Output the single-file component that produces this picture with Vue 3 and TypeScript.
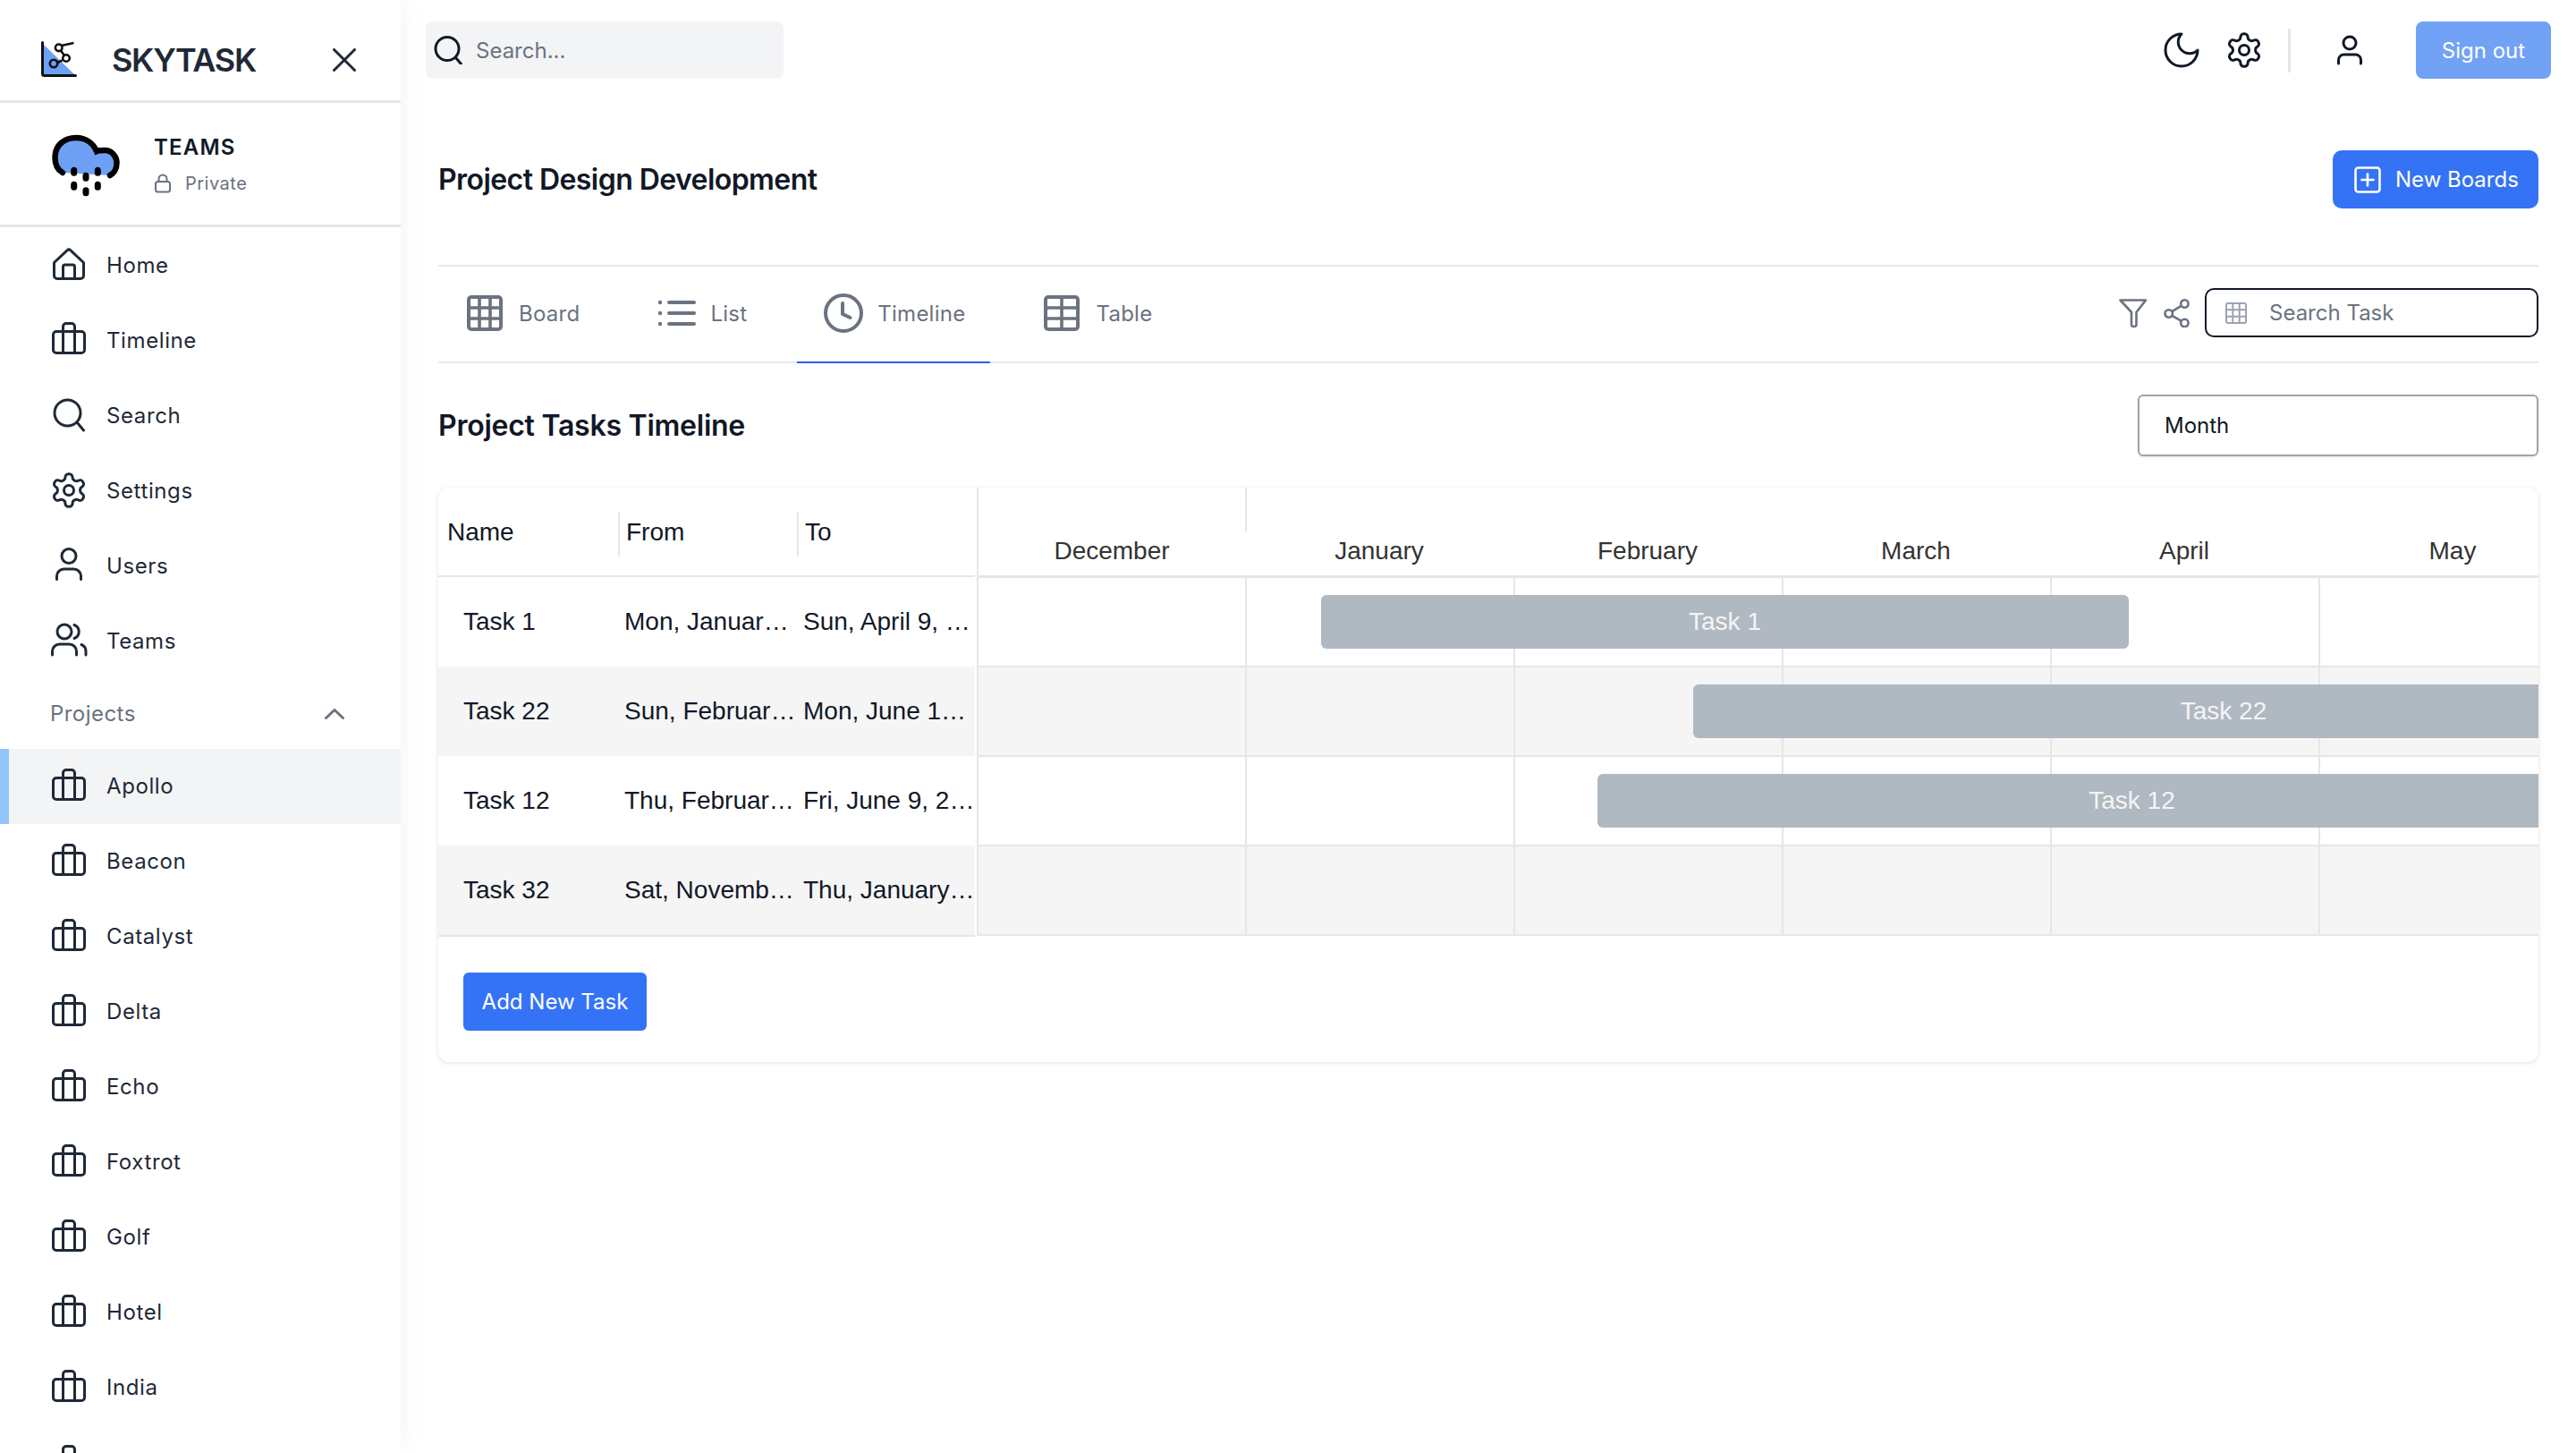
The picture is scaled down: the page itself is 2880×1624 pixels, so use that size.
<script setup lang="ts">
type Glyph = { d: string; vb?: string; sw?: number }

const gear =
  'M12.22 2h-.44a2 2 0 0 0-2 2v.18a2 2 0 0 1-1 1.73l-.43.25a2 2 0 0 1-2 0l-.15-.08a2 2 0 0 0-2.73.73l-.22.38a2 2 0 0 0 .73 2.73l.15.1a2 2 0 0 1 1 1.72v.51a2 2 0 0 1-1 1.74l-.15.09a2 2 0 0 0-.73 2.73l.22.38a2 2 0 0 0 2.73.73l.15-.08a2 2 0 0 1 2 0l.43.25a2 2 0 0 1 1 1.73V20a2 2 0 0 0 2 2h.44a2 2 0 0 0 2-2v-.18a2 2 0 0 1 1-1.73l.43-.25a2 2 0 0 1 2 0l.15.08a2 2 0 0 0 2.73-.73l.22-.39a2 2 0 0 0-.73-2.73l-.15-.08a2 2 0 0 1-1-1.74v-.5a2 2 0 0 1 1-1.74l.15-.09a2 2 0 0 0 .73-2.73l-.22-.38a2 2 0 0 0-2.73-.73l-.15.08a2 2 0 0 1-2 0l-.43-.25a2 2 0 0 1-1-1.73V4a2 2 0 0 0-2-2zM15 12a3 3 0 1 1-6 0 3 3 0 0 1 6 0Z'

const glyphs: Record<string, Glyph> = {
  home: { d: 'M5.5 19.5 20.3 5.6a2.5 2.5 0 0 1 3.4 0L38.5 19.5V34a3.5 3.5 0 0 1-3.5 3.5H9A3.5 3.5 0 0 1 5.5 34ZM15.5 37.5V24a2 2 0 0 1 2-2h9a2 2 0 0 1 2 2v13.5' },
  case: { d: 'M8 12.5H36a3.5 3.5 0 0 1 3.5 3.5V33a3.5 3.5 0 0 1-3.5 3.5H8A3.5 3.5 0 0 1 4.5 33V16A3.5 3.5 0 0 1 8 12.5ZM15.5 36.5V7a3.5 3.5 0 0 1 3.5-3.5h6a3.5 3.5 0 0 1 3.5 3.5v29.5' },
  search: { d: 'M35 19.5a14.5 14.5 0 1 1-29 0 14.5 14.5 0 0 1 29 0ZM31 30l7.5 9' },
  gear: { d: gear, vb: '0 0 24 24', sw: 1.64 },
  user: { d: 'M30 11.5a8 8 0 1 1-16 0 8 8 0 0 1 16 0ZM8.5 37.5V34a8 8 0 0 1 8-8h11a8 8 0 0 1 8 8v3.5' },
  users: { d: 'M25 12a8 8 0 1 1-16 0 8 8 0 0 1 16 0ZM3.5 38v-4a8 8 0 0 1 8-8h11a8 8 0 0 1 8 8v4M28 4.5a8 8 0 0 1 0 15M36 26.5a8 8 0 0 1 5 7.5v4' },
}

const mainNav = [
  { label: 'Home', icon: 'home' },
  { label: 'Timeline', icon: 'case' },
  { label: 'Search', icon: 'search' },
  { label: 'Settings', icon: 'gear' },
  { label: 'Users', icon: 'user' },
  { label: 'Teams', icon: 'users' },
]

const projects = ['Apollo', 'Beacon', 'Catalyst', 'Delta', 'Echo', 'Foxtrot', 'Golf', 'Hotel', 'India', '']
const months = ['December', 'January', 'February', 'March', 'April', 'May']

const tasks = [
  { name: 'Task 1', from: 'Mon, January 9, 2023', to: 'Sun, April 9, 2023' },
  { name: 'Task 22', from: 'Sun, February 5, 2023', to: 'Mon, June 12, 2023' },
  { name: 'Task 12', from: 'Thu, February 9, 2023', to: 'Fri, June 9, 2023' },
  { name: 'Task 32', from: 'Sat, November 5, 2022', to: 'Thu, January 5, 2023' },
]

const bars = [
  { label: 'Task 1', left: 385, top: 120, width: 903 },
  { label: 'Task 22', left: 801, top: 220, width: 1186 },
  { label: 'Task 12', left: 694, top: 320, width: 1195 },
]
</script>

<template>
  <div class="app">
    <aside class="side">
      <div class="brand">
        <svg class="logo" width="40" height="40" viewBox="0 0 40 40" fill="none">
          <path d="M2 3 37 37H2Z" fill="#6ea0f5" />
          <path d="M1.5 1.5V36.5a2 2 0 0 0 2 2H38.5" stroke="#111" stroke-width="3" stroke-linecap="round" />
          <path d="M22.5 5 36.5 2M22 10.5l3.5 5M23.5 21.5l-5.5 2.5" stroke="#111" stroke-width="2.6" />
          <circle cx="19.7" cy="7.3" r="3.8" stroke="#111" stroke-width="2.6" />
          <circle cx="28" cy="19" r="3.8" stroke="#111" stroke-width="2.6" />
          <circle cx="14" cy="25" r="4.2" stroke="#111" stroke-width="2.6" />
        </svg>
        <span class="brand-name">SKYTASK</span>
        <svg class="close" width="26" height="26" viewBox="0 0 26 26" fill="none">
          <path d="M1.5 1.5 24.5 24.5M24.5 1.5 1.5 24.5" stroke="#1f2937" stroke-width="3" stroke-linecap="round" />
        </svg>
      </div>

      <div class="team">
        <svg class="cloud" width="80" height="80" viewBox="0 0 80 80" fill="none">
          <path d="M14 47C7 43 5.5 36 5.5 30 5.5 16 16 8 29 8 40 8 48 14 52 23 54 22 58 22 61 22 69 22 74.5 29 74.5 36 74.5 43 71 48 67 50L14 47Z" fill="#6ea0f5" />
          <path d="M14 47C7 43 5.5 36 5.5 30 5.5 16 16 8 29 8 40 8 48 14 52 23 54 22 58 22 61 22 69 22 74.5 29 74.5 36 74.5 43 71 48 67 50" stroke="#000" stroke-width="6.5" stroke-linecap="round" />
          <rect x="23.2" y="40.7" width="7" height="10" rx="3.5" fill="#000" />
          <rect x="36.5" y="46.7" width="7" height="10" rx="3.5" fill="#000" />
          <rect x="49.8" y="40.7" width="7" height="10" rx="3.5" fill="#000" />
          <rect x="23.2" y="56.7" width="7" height="10" rx="3.5" fill="#000" />
          <rect x="36.5" y="63.3" width="7" height="10" rx="3.5" fill="#000" />
          <rect x="49.8" y="56.7" width="7" height="10" rx="3.5" fill="#000" />
        </svg>
        <div class="team-text">
          <div class="team-name">TEAMS</div>
          <div class="team-sub">
            <svg width="20" height="22" viewBox="0 0 20 22" fill="none">
              <rect x="2" y="9" width="16" height="11.5" rx="2.5" stroke="#6b7280" stroke-width="2" />
              <path d="M5.5 9V6a4.5 4.5 0 0 1 9 0v3" stroke="#6b7280" stroke-width="2" />
            </svg>
            <span>Private</span>
          </div>
        </div>
      </div>

      <nav>
        <a v-for="item in mainNav" :key="item.label" class="nav-row">
          <svg class="nav-icon" width="44" height="44" :viewBox="glyphs[item.icon].vb || '0 0 44 44'" fill="none">
            <path :d="glyphs[item.icon].d" stroke="#1f2937" :stroke-width="glyphs[item.icon].sw || 3" stroke-linecap="round" stroke-linejoin="round" />
          </svg>
          <span>{{ item.label }}</span>
        </a>
        <div class="nav-head">
          <span>Projects</span>
          <svg width="22" height="12" viewBox="0 0 22 12" fill="none">
            <path d="M1.5 10.5 11 1.5l9.5 9" stroke="#6b7280" stroke-width="3" stroke-linecap="round" stroke-linejoin="round" />
          </svg>
        </div>
        <a v-for="(name, i) in projects" :key="i" class="nav-row project" :class="{ current: i === 0 }">
          <svg class="nav-icon" width="44" height="44" viewBox="0 0 44 44" fill="none">
            <path :d="glyphs.case.d" stroke="#1f2937" stroke-width="3" stroke-linejoin="round" />
          </svg>
          <span v-if="name">{{ name }}</span>
        </a>
      </nav>
    </aside>

    <main class="main">
      <header class="top">
        <div class="top-search">
          <svg width="32" height="32" viewBox="0 0 32 32" fill="none">
            <path d="M27 14.5a13 13 0 1 1-26 0 13 13 0 0 1 26 0ZM23.5 24.5l6 7" stroke="#111827" stroke-width="3" stroke-linecap="round" transform="translate(1 0)" />
          </svg>
          <span>Search...</span>
        </div>
        <div class="top-actions">
          <svg class="moon" width="48" height="48" viewBox="0 0 24 24" fill="none">
            <path d="M12 3a6 6 0 0 0 9 9 9 9 0 1 1-9-9Z" stroke="#111827" stroke-width="1.5" stroke-linecap="round" stroke-linejoin="round" />
          </svg>
          <svg class="cog" width="44" height="44" viewBox="0 0 24 24" fill="none">
            <path :d="gear" stroke="#111827" stroke-width="1.64" stroke-linecap="round" stroke-linejoin="round" />
          </svg>
          <span class="v-rule"></span>
          <svg class="person" width="32" height="36" viewBox="0 0 32 36" fill="none">
            <circle cx="16" cy="10" r="7" stroke="#111827" stroke-width="3" />
            <path d="M3.5 33v-4a6 6 0 0 1 6-6h13a6 6 0 0 1 6 6v4" stroke="#111827" stroke-width="3" stroke-linecap="round" />
          </svg>
          <button class="sign-out">Sign out</button>
        </div>
      </header>

      <div class="content">
        <div class="title-row">
          <h1>Project Design Development</h1>
          <button class="new-board">
            <svg width="30" height="30" viewBox="0 0 30 30" fill="none">
              <rect x="1.5" y="1.5" width="27" height="27" rx="3" stroke="#fff" stroke-width="2.6" />
              <path d="M15 8.5v13M8.5 15h13" stroke="#fff" stroke-width="2.6" stroke-linecap="round" />
            </svg>
            <span>New Boards</span>
          </button>
        </div>

        <div class="tabs">
          <a class="tab">
            <svg width="44" height="44" viewBox="0 0 44 44" fill="none" stroke="#6b7280">
              <rect x="4" y="4" width="36" height="36" rx="3" stroke-width="4" />
              <path d="M16 4v36M28 4v36M4 16h36M4 28h36" stroke-width="3.6" />
            </svg>
            <span>Board</span>
          </a>
          <a class="tab">
            <svg width="44" height="44" viewBox="0 0 44 44" fill="none" stroke="#6b7280" stroke-linecap="round">
              <path d="M14 10h28M14 22h28M14 34h28" stroke-width="4" />
              <circle cx="4" cy="10" r="1" stroke-width="2.4" />
              <circle cx="4" cy="22" r="1" stroke-width="2.4" />
              <circle cx="4" cy="34" r="1" stroke-width="2.4" />
            </svg>
            <span>List</span>
          </a>
          <a class="tab active">
            <svg width="44" height="44" viewBox="0 0 44 44" fill="none" stroke="#6b7280" stroke-width="4" stroke-linecap="round" stroke-linejoin="round">
              <circle cx="22" cy="22" r="20" />
              <path d="M21 11v12l8.5 4" />
            </svg>
            <span>Timeline</span>
          </a>
          <a class="tab">
            <svg width="44" height="44" viewBox="0 0 44 44" fill="none" stroke="#6b7280">
              <rect x="4" y="4" width="36" height="36" rx="3" stroke-width="4" />
              <path d="M22 4v36M4 16h36M4 28h36" stroke-width="3.6" />
            </svg>
            <span>Table</span>
          </a>
          <div class="tab-tools">
            <svg width="36" height="36" viewBox="0 0 36 36" fill="none">
              <path d="M3.5 3.5H32L21.5 17V30.5a2.5 2.5 0 0 1-2.5 2.5h-.5a2.5 2.5 0 0 1-2.5-2.5V17Z" stroke="#6b7280" stroke-width="2.6" stroke-linejoin="round" />
            </svg>
            <svg width="32" height="32" viewBox="0 0 32 32" fill="none" stroke="#6b7280" stroke-width="2.6">
              <circle cx="24.4" cy="5.5" r="4.2" />
              <circle cx="6.7" cy="16.5" r="4.2" />
              <circle cx="24.4" cy="27" r="4.2" />
              <path d="M10.5 14.2l10-6.4M10.5 18.8l10 5.9" />
            </svg>
            <div class="task-search">
              <svg width="24" height="24" viewBox="0 0 24 24" fill="none" stroke="#9ca3af" stroke-width="2">
                <rect x="1" y="1" width="22" height="22" rx="2" />
                <path d="M8.3 1v22M15.7 1v22M1 8.3h22M1 15.7h22" />
              </svg>
              <span>Search Task</span>
            </div>
          </div>
        </div>

        <div class="timeline-row">
          <h2>Project Tasks Timeline</h2>
          <div class="month-select">Month</div>
        </div>

        <section class="card">
          <div class="gantt">
            <div class="table">
              <div class="thead">
                <div class="th">Name</div>
                <div class="th"><span class="th-in">From</span></div>
                <div class="th"><span class="th-in">To</span></div>
              </div>
              <div v-for="(t, i) in tasks" :key="t.name" class="tr" :class="{ odd: i % 2 === 1 }">
                <div class="td td-name">{{ t.name }}</div>
                <div class="td">{{ t.from }}</div>
                <div class="td">{{ t.to }}</div>
              </div>
            </div>
            <div class="chart">
              <div class="years">
                <div class="year"></div>
              </div>
              <div class="months">
                <div v-for="m in months" :key="m" class="month">{{ m }}</div>
              </div>
              <div v-for="(t, i) in tasks" :key="t.name" class="grid-row" :class="{ odd: i % 2 === 1 }">
                <div v-for="m in months" :key="m" class="grid-cell"></div>
              </div>
              <div
                v-for="b in bars"
                :key="b.label"
                class="bar"
                :style="{ left: b.left + 'px', top: b.top + 'px', width: b.width + 'px' }"
              >
                {{ b.label }}
              </div>
            </div>
          </div>
          <div class="card-foot">
            <button class="add-task">Add New Task</button>
          </div>
        </section>
      </div>
    </main>
  </div>
</template>

<style scoped>
.app {
  display: flex;
  width: 2880px;
  height: 1624px;
  overflow: hidden;
  background: #fff;
  font-family: Inter, "Noto Sans", sans-serif;
  font-size: 24px;
  color: #111827;
}
.side {
  flex: 0 0 448px;
  height: 1624px;
  overflow: hidden;
  background: #fff;
  box-shadow: 0 0 30px rgba(17, 24, 39, 0.05);
  position: relative;
  z-index: 1;
}
.brand {
  display: flex;
  align-items: center;
  height: 90px;
  padding: 22px 0 0 46px;
  border-bottom: 3px solid #e5e7eb;
}
.logo {
  margin-top: -3px;
}
.brand-name {
  margin-left: 39px;
  font-size: 36px;
  font-weight: 600;
  letter-spacing: -1.3px;
  color: #1f2937;
}
.close {
  margin-left: auto;
  margin-right: 50px;
}
.team {
  display: flex;
  align-items: center;
  height: 136px;
  padding-left: 56px;
  border-bottom: 3px solid #e5e7eb;
}
.cloud {
  align-self: flex-start;
  margin-top: 31px;
}
.team-text {
  margin-left: 36px;
}
.team-name {
  font-size: 24px;
  font-weight: 600;
  letter-spacing: 1.2px;
  line-height: 30px;
  color: #111827;
}
.team-sub {
  display: flex;
  align-items: center;
  gap: 15px;
  margin-top: 13px;
  font-size: 20px;
  letter-spacing: 0.5px;
  color: #6b7280;
}
.nav-row {
  display: flex;
  align-items: center;
  height: 84px;
  padding-left: 55px;
  letter-spacing: 0.6px;
  color: #1f2937;
  box-sizing: border-box;
}
.nav-row.project span {
  margin-top: -2px;
}
.nav-row.current {
  background: #f3f4f6;
  border-left: 10px solid #93c5fd;
  padding-left: 45px;
}
.nav-icon {
  flex: none;
  margin-right: 20px;
}
.nav-head {
  display: flex;
  align-items: center;
  justify-content: space-between;
  height: 79px;
  padding: 0 63px 0 56px;
  letter-spacing: 0.45px;
  color: #6b7280;
}
.main {
  flex: 1;
  min-width: 0;
}
.top {
  display: flex;
  align-items: center;
  justify-content: space-between;
  height: 64px;
  padding: 24px 28px;
}
.top-search {
  display: flex;
  align-items: center;
  gap: 15px;
  width: 400px;
  height: 64px;
  padding-left: 9px;
  box-sizing: border-box;
  background: #f3f4f6;
  border-radius: 8px;
  color: #6b7280;
}
.top-actions {
  display: flex;
  align-items: center;
}
.cog {
  margin-left: 24px;
}
.v-rule {
  width: 3px;
  height: 49px;
  margin-left: 27px;
  background: #e5e7eb;
}
.person {
  margin-left: 50px;
}
button {
  font: inherit;
  border: 0;
  color: #fff;
  cursor: pointer;
}
.sign-out {
  width: 151px;
  height: 64px;
  margin-left: 58px;
  padding: 0;
  border-radius: 8px;
  background: #72a2f5;
}
.content {
  padding: 56px 42px 0;
}
.title-row {
  display: flex;
  align-items: center;
  justify-content: space-between;
  height: 65px;
  margin-bottom: 63px;
}
h1,
h2 {
  margin: 0;
  font-size: 32px;
  font-weight: 600;
  color: #111827;
}
h1 {
  letter-spacing: -0.56px;
}
h2 {
  letter-spacing: -0.25px;
}
.new-board {
  display: flex;
  align-items: center;
  gap: 16px;
  width: 230px;
  height: 65px;
  padding: 0 0 0 24px;
  border-radius: 10px;
  background: #3573f6;
}
.tabs {
  display: flex;
  align-items: center;
  gap: 28px;
  height: 106px;
  border-top: 2px solid #e5e7eb;
  border-bottom: 2px solid #e5e7eb;
}
.tab {
  display: flex;
  align-items: center;
  gap: 16px;
  height: 108px;
  margin-bottom: -2px;
  padding: 0 28px 2px 30px;
  box-sizing: border-box;
  border-bottom: 2px solid transparent;
  letter-spacing: 0.25px;
  color: #6b7280;
}
.tab.active {
  border-bottom-color: #2563eb;
}
.tab-tools {
  display: flex;
  align-items: center;
  gap: 15px;
  margin-left: auto;
  margin-top: -3px;
}
.task-search {
  display: flex;
  align-items: center;
  gap: 25px;
  width: 373px;
  height: 55px;
  padding-left: 21px;
  box-sizing: border-box;
  border: 2px solid #111827;
  border-radius: 10px;
  color: #6b7280;
}
.timeline-row {
  display: flex;
  align-items: center;
  justify-content: space-between;
  height: 69px;
  margin: 35px 0;
}
.month-select {
  display: flex;
  align-items: center;
  width: 448px;
  height: 69px;
  padding-left: 28px;
  box-sizing: border-box;
  border: 2px solid #9ca3af;
  border-radius: 6px;
  box-shadow: 0 1px 3px rgba(0, 0, 0, 0.1);
  color: #111827;
}
.card {
  height: 642px;
  border-radius: 12px;
  overflow: hidden;
  background: #fff;
  box-shadow: 0 1px 5px rgba(0, 0, 0, 0.12);
}
.gantt {
  display: flex;
  font-family: "Liberation Sans", Arial, sans-serif;
  font-size: 28px;
}
.table {
  flex: 0 0 600px;
}
.thead {
  display: grid;
  grid-template-columns: 201px 200px 199px;
  align-items: start;
  height: 98px;
  border-bottom: 2px solid #e6e6e6;
  color: #111827;
}
.th {
  padding: 27px 0 0 10px;
  line-height: 46px;
}
.th:not(:first-child) {
  padding: 27px 0 0;
}
.th-in {
  display: block;
  height: 50px;
  padding-left: 7px;
  border-left: 2px solid #e6e6e6;
}
.tr {
  display: grid;
  grid-template-columns: 200px 200px 200px;
  align-items: center;
  height: 100px;
  color: #111827;
}
.tr:last-child {
  box-shadow: 0 2px 0 #e6e6e6;
}
.tr.odd {
  background: #f5f5f5;
}
.td {
  padding-left: 8px;
  white-space: nowrap;
  overflow: hidden;
  text-overflow: ellipsis;
}
.td-name {
  padding-left: 28px;
}
.chart {
  position: relative;
  flex: 0 0 1746px;
  margin-left: 2px;
  height: 503px;
  overflow: hidden;
}
.years {
  display: flex;
  height: 50px;
  border-left: 2px solid #e6e6e6;
  box-sizing: border-box;
}
.year {
  flex: 0 0 298px;
  border-right: 2px solid #e6e6e6;
}
.months {
  display: flex;
  height: 51px;
  box-sizing: border-box;
  border-bottom: 3px solid #e6e6e6;
  color: #333;
}
.month {
  flex: 0 0 300px;
  box-sizing: border-box;
  text-align: center;
  line-height: 41px;
}
.month:first-child {
  border-left: 2px solid #e6e6e6;
}
.grid-row {
  display: flex;
  height: 100px;
  box-sizing: border-box;
  border-bottom: 2px solid #e6e6e6;
}
.grid-row.odd {
  background: #f5f5f5;
}
.grid-cell {
  flex: 0 0 300px;
  box-sizing: border-box;
  border-left: 2px solid #e6e6e6;
}
.bar {
  position: absolute;
  height: 60px;
  border-radius: 6px;
  background: #b0b8c2;
  color: #f5f5f5;
  line-height: 60px;
  text-align: center;
}
.card-foot {
  padding: 39px 0 0 28px;
}
.add-task {
  width: 205px;
  height: 65px;
  padding: 0;
  border-radius: 6px;
  background: #3573f6;
}
</style>
